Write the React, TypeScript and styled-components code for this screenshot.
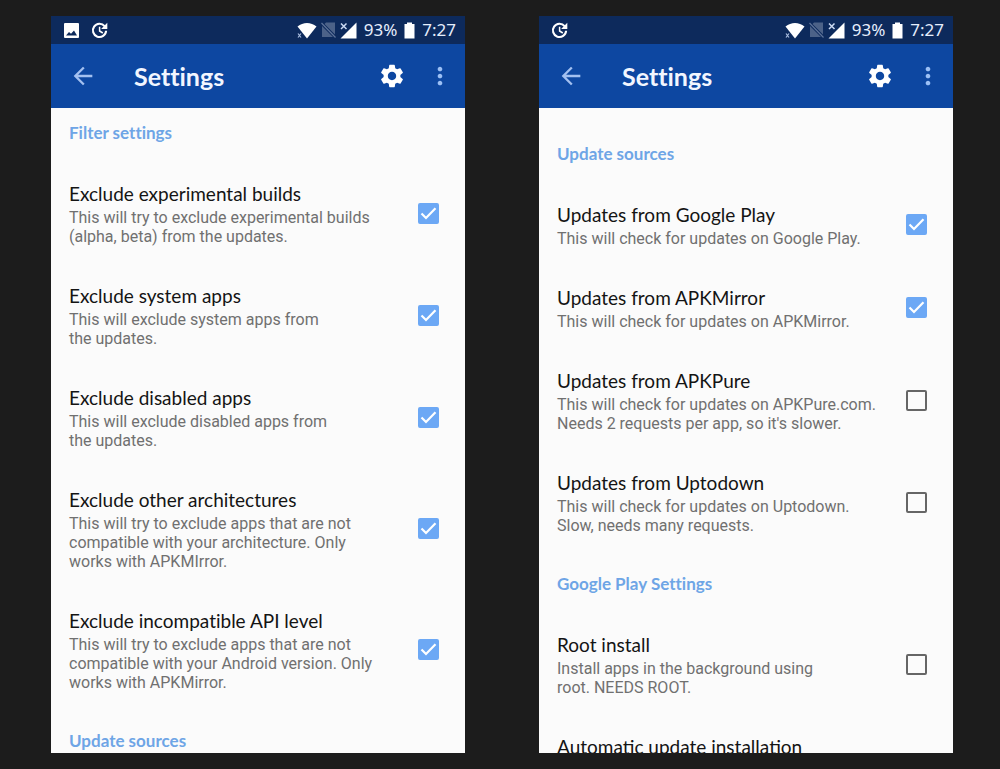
import React, { useId, useState } from "react";
import styled, { createGlobalStyle } from "styled-components";
import { MdArrowBack, MdMoreVert, MdSettings } from "react-icons/md";

const GlobalStyle = createGlobalStyle`
  *, *::before, *::after { box-sizing: border-box; }
  body {
    margin: 0;
    background: #1c1c1c;
    font-family: Lato, "Noto Sans", sans-serif;
    font-variant-ligatures: none;
  }
`;

const Page = styled.main`
  display: grid;
  grid-template-columns: repeat(2, minmax(0, 1fr));
  gap: 74px;
  height: 100vh;
  padding: 16px 47px 16px 51px;
`;

const Screen = styled.section`
  display: flex;
  flex-direction: column;
  min-height: 0;
  overflow: hidden;
  background: #fbfbfb;
`;

const StatusBar = styled.div`
  display: flex;
  flex: none;
  align-items: center;
  justify-content: space-between;
  height: 28px;
  padding: 0 9px 0 10px;
  background: #0d2a5c;
  color: #fff;
`;

const Notifications = styled.div`
  display: flex;
  align-items: center;
  gap: 7px;
`;

const Indicators = styled.div`
  display: flex;
  align-items: center;
  gap: 7px;
  font: 400 17px/28px "Noto Sans", sans-serif;
  color: #e6eefc;
`;

const Radios = styled.span`
  display: flex;
  align-items: center;
  gap: 4px;
`;

const Toolbar = styled.header`
  display: flex;
  flex: none;
  align-items: center;
  height: 64px;
  padding: 0 11px 0 18px;
  background: #0d47a1;
`;

const Heading = styled.h1`
  flex: 1;
  margin: 0;
  padding-left: 37px;
  color: #f2f6ff;
  font-size: 25px;
  font-weight: 700;
  line-height: 28px;
`;

const IconButton = styled.button<{ $tone: string }>`
  display: grid;
  place-items: center;
  padding: 0;
  border: 0;
  background: none;
  color: ${(p) => p.$tone};
  cursor: pointer;

  & + & { margin-left: 20px; }
`;

const Preferences = styled.div<{ $offset: number }>`
  flex: 1;
  min-height: 0;
  overflow: hidden;
  padding-top: ${(p) => p.$offset}px;
`;

const GroupTitle = styled.h2`
  margin: 0;
  padding: 14px 18px 24px;
  color: #6ea5e6;
  font-size: 17px;
  font-weight: 700;
  line-height: 22px;
`;

const Row = styled.label`
  display: flex;
  align-items: center;
  justify-content: space-between;
  padding: 12px 26px 24px 18px;
  cursor: pointer;
`;

const LinkRow = styled.button`
  display: block;
  width: 100%;
  padding: 12px 26px 24px 18px;
  border: 0;
  background: none;
  font-family: inherit;
  text-align: left;
  cursor: pointer;
`;

const RowTitle = styled.span`
  display: block;
  color: #141414;
  font-size: 19px;
  line-height: 28px;
`;

const Summary = styled.span`
  display: block;
  color: #707070;
  font-family: Roboto, "Noto Sans", sans-serif;
  font-size: 16px;
  line-height: 19px;
  white-space: pre-line;
`;

const CheckWrap = styled.span`
  display: grid;
  flex: none;
  place-items: center;

  & > * { grid-area: 1 / 1; }
`;

const CheckInput = styled.input`
  appearance: none;
  width: 21px;
  height: 21px;
  margin: 0;
  border: 2px solid #666;
  border-radius: 2px;
  cursor: pointer;

  &:checked {
    border-color: #6ca8f5;
    background: #6ca8f5;
  }
  & + svg { display: none; pointer-events: none; }
  &:checked + svg { display: block; }
`;

function PictureIcon() {
  return (
    <svg width="21" height="21" viewBox="0 0 21 21" aria-hidden="true">
      <rect x="3" y="3" width="15" height="15" rx="1" fill="#fff" />
      <path d="M5 15.5L8 12L10 13.8L13 10.5L16 15.5Z" fill="#0d2a5c" />
    </svg>
  );
}

function UpdateIcon() {
  return (
    <svg width="21" height="21" viewBox="0 0 21 21" fill="none" stroke="#fff" aria-hidden="true">
      <path d="M15.6 6.2A6.6 6.6 0 1 0 17.1 10.8" strokeWidth="2.1" />
      <path d="M18.3 2.8V9H12.1Z" fill="#fff" stroke="none" />
      <path d="M10.6 6.8V11L13.8 13" strokeWidth="1.5" />
    </svg>
  );
}

function WifiIcon() {
  return (
    <svg width="20" height="17" viewBox="0 0 20 17" aria-hidden="true">
      <path d="M0.5 4.5C6 -0.3 14 -0.3 19.5 4.5L10 16.5Z" fill="#fff" />
      <path d="M1 11.5l3 4M4 11.5l-3 4" stroke="#a9bddf" strokeWidth="1.2" />
    </svg>
  );
}

function NoSimIcon() {
  return (
    <svg width="15" height="16" viewBox="0 0 15 16" aria-hidden="true">
      <path d="M5 0.5H14V12.5L3.5 2ZM1 4L12 15H1Z" fill="#4c6288" />
      <path d="M0.5 1L14.5 15.5" stroke="#5f749a" strokeWidth="1.2" />
    </svg>
  );
}

function SignalIcon() {
  return (
    <svg width="17" height="17" viewBox="0 0 17 17" aria-hidden="true">
      <path d="M16.5 0.5V16.5H0.5Z" fill="#fff" />
      <path d="M1 1.5l5.5 5.5M6.5 1.5L1 7" stroke="#cbdaf3" strokeWidth="1.5" />
    </svg>
  );
}

function BatteryIcon() {
  return (
    <svg width="11" height="17" viewBox="0 0 11 17" aria-hidden="true">
      <path d="M3 0.5H8V2H10.5V16.5H0.5V2H3Z" fill="#fff" />
    </svg>
  );
}

function CheckMark() {
  return (
    <svg width="21" height="21" viewBox="0 0 21 21" aria-hidden="true">
      <path d="M3.5 10.5L8 15L17.5 5.2" fill="none" stroke="#fff" strokeWidth="2.2" />
    </svg>
  );
}

type Preference = { title: string; summary?: string; checked?: boolean };
type Group = { name: string; items: Preference[] };

function PreferenceRow({ title, summary, checked = false }: Preference) {
  const [on, setOn] = useState(checked);
  const id = useId();
  if (!summary) {
    return (
      <LinkRow type="button">
        <RowTitle>{title}</RowTitle>
      </LinkRow>
    );
  }
  return (
    <Row htmlFor={id}>
      <span>
        <RowTitle>{title}</RowTitle>
        <Summary>{summary}</Summary>
      </span>
      <CheckWrap>
        <CheckInput id={id} type="checkbox" checked={on} onChange={() => setOn(!on)} />
        <CheckMark />
      </CheckWrap>
    </Row>
  );
}

function Phone({ groups, offset = 0, hasPicture = false }: { groups: Group[]; offset?: number; hasPicture?: boolean }) {
  return (
    <Screen>
      <StatusBar>
        <Notifications>
          {hasPicture && <PictureIcon />}
          <UpdateIcon />
        </Notifications>
        <Indicators>
          <Radios>
            <WifiIcon />
            <NoSimIcon />
            <SignalIcon />
          </Radios>
          <span>93%</span>
          <BatteryIcon />
          <span>7:27</span>
        </Indicators>
      </StatusBar>
      <Toolbar>
        <IconButton $tone="#a3c0f0" aria-label="Back"><MdArrowBack size={28} /></IconButton>
        <Heading>Settings</Heading>
        <IconButton $tone="#fff" aria-label="App settings"><MdSettings size={28} /></IconButton>
        <IconButton $tone="#9cc0f5" aria-label="More options"><MdMoreVert size={28} /></IconButton>
      </Toolbar>
      <Preferences $offset={offset}>
        {groups.map((group) => (
          <section key={group.name}>
            <GroupTitle>{group.name}</GroupTitle>
            {group.items.map((item) => <PreferenceRow key={item.title} {...item} />)}
          </section>
        ))}
      </Preferences>
    </Screen>
  );
}

const filterGroups: Group[] = [
  {
    name: "Filter settings",
    items: [
      { title: "Exclude experimental builds", summary: "This will try to exclude experimental builds\n(alpha, beta) from the updates.", checked: true },
      { title: "Exclude system apps", summary: "This will exclude system apps from\nthe updates.", checked: true },
      { title: "Exclude disabled apps", summary: "This will exclude disabled apps from\nthe updates.", checked: true },
      { title: "Exclude other architectures", summary: "This will try to exclude apps that are not\ncompatible with your architecture. Only\nworks with APKMIrror.", checked: true },
      { title: "Exclude incompatible API level", summary: "This will try to exclude apps that are not\ncompatible with your Android version. Only\nworks with APKMirror.", checked: true },
    ],
  },
  { name: "Update sources", items: [] },
];

const sourceGroups: Group[] = [
  {
    name: "Update sources",
    items: [
      { title: "Updates from Google Play", summary: "This will check for updates on Google Play.", checked: true },
      { title: "Updates from APKMirror", summary: "This will check for updates on APKMirror.", checked: true },
      { title: "Updates from APKPure", summary: "This will check for updates on APKPure.com.\nNeeds 2 requests per app, so it's slower." },
      { title: "Updates from Uptodown", summary: "This will check for updates on Uptodown.\nSlow, needs many requests." },
    ],
  },
  {
    name: "Google Play Settings",
    items: [
      { title: "Root install", summary: "Install apps in the background using\nroot. NEEDS ROOT." },
      { title: "Automatic update installation" },
    ],
  },
];

export default function App() {
  return (
    <>
      <GlobalStyle />
      <Page>
        <Phone groups={filterGroups} hasPicture />
        <Phone groups={sourceGroups} offset={21} />
      </Page>
    </>
  );
}
